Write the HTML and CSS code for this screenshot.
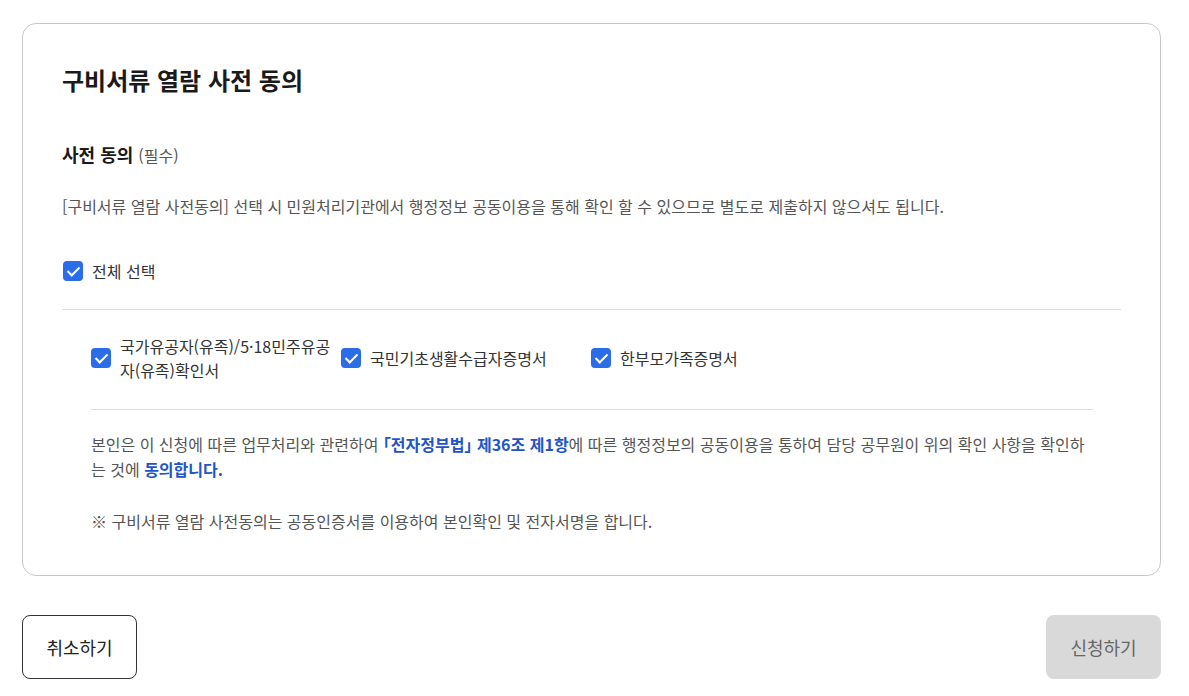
FILE: index.html
```html
<!DOCTYPE html>
<html lang="ko">
<head>
  <meta charset="UTF-8">
  <title>구비서류 열람 사전 동의</title>
  <link rel="stylesheet" href="styles.css">
</head>
<body>
  <div class="page">
    <section class="card">
      <h1 class="title">구비서류 열람 사전 동의</h1>

      <h2 class="sub">사전 동의 <span class="req">(필수)</span></h2>
      <p class="desc">[구비서류 열람 사전동의] 선택 시 민원처리기관에서 행정정보 공동이용을 통해 확인 할 수 있으므로 별도로 제출하지 않으셔도 됩니다.</p>

      <label class="check all">
        <input type="checkbox" checked>
        <span class="box"></span>
        <span class="label">전체 선택</span>
      </label>

      <div class="items">
        <div class="docs">
          <label class="check">
            <input type="checkbox" checked>
            <span class="box"></span>
            <span class="label">국가유공자(유족)/5·18민주유공자(유족)확인서</span>
          </label>
          <label class="check">
            <input type="checkbox" checked>
            <span class="box"></span>
            <span class="label">국민기초생활수급자증명서</span>
          </label>
          <label class="check">
            <input type="checkbox" checked>
            <span class="box"></span>
            <span class="label">한부모가족증명서</span>
          </label>
        </div>

        <p class="agree">본인은 이 신청에 따른 업무처리와 관련하여 <strong class="law">「전자정부법」 제36조 제1항</strong>에 따른 행정정보의 공동이용을 통하여 담당 공무원이 위의 확인 사항을 확인하는 것에 <strong>동의합니다.</strong></p>
        <p class="note">※ 구비서류 열람 사전동의는 공동인증서를 이용하여 본인확인 및 전자서명을 합니다.</p>
      </div>
    </section>

    <div class="actions">
      <button class="btn cancel">취소하기</button>
      <button class="btn submit" disabled>신청하기</button>
    </div>
  </div>
</body>
</html>
```

FILE: styles.css
```css
body {
  margin: 0;
  font-family: "Noto Sans CJK KR", "Noto Sans", sans-serif;
  color: #222;
  background: #fff;
}

.page {
  padding: 23px 28px 0 22px;
}

.card {
  border: 1px solid #c8c8c8;
  border-radius: 14px;
  padding: 38px 39px 42px 39px;
}

.title {
  margin: 0;
  font-size: 24px;
  font-weight: 700;
  line-height: 36px;
  color: #1a1a1a;
}

.sub {
  margin: 44px 0 0;
  font-size: 18px;
  font-weight: 700;
  line-height: 24px;
  color: #1a1a1a;
}

.req {
  font-size: 16px;
  font-weight: 400;
  color: #555;
}

.desc {
  margin: 27px 0 0;
  font-size: 16px;
  line-height: 24px;
  color: #555;
}

.check {
  display: flex;
  align-items: center;
  gap: 9px;
  cursor: pointer;
}

.check input {
  display: none;
}

.box {
  flex: none;
  width: 20px;
  height: 20px;
  border-radius: 4px;
  background: #2b6de8;
  position: relative;
}

.box::after {
  content: "";
  position: absolute;
  left: 7px;
  top: 3px;
  width: 5px;
  height: 10px;
  border: solid #fff;
  border-width: 0 2px 2px 0;
  transform: rotate(45deg);
}

.check .label {
  font-size: 16px;
  line-height: 24px;
  color: #333;
}

.all {
  margin-top: 41px;
  padding: 0 0 26px 1px;
  border-bottom: 1px solid #ddd;
}

.items {
  padding: 0 28px 0 29px;
}

.docs {
  display: grid;
  grid-template-columns: repeat(3, 250px);
  padding: 24px 0 27px;
  border-bottom: 1px solid #ddd;
}

.docs .check {
  padding-right: 10px;
}

.agree {
  margin: 22px 0 0;
  font-size: 16px;
  line-height: 25px;
  color: #555;
}

.agree strong {
  color: #1f55c4;
  font-weight: 700;
}

.agree .law {
  font-feature-settings: "palt";
}

.note {
  margin: 27px 0 0;
  font-size: 16px;
  line-height: 24px;
  color: #555;
}

.actions {
  display: flex;
  justify-content: space-between;
  margin-top: 39px;
}

.btn {
  width: 115px;
  height: 64px;
  border-radius: 8px;
  font-family: inherit;
  font-size: 18px;
}

.cancel {
  background: #fff;
  border: 1px solid #333;
  color: #222;
}

.submit {
  background: #d9d9d9;
  border: none;
  color: #666;
}
```
